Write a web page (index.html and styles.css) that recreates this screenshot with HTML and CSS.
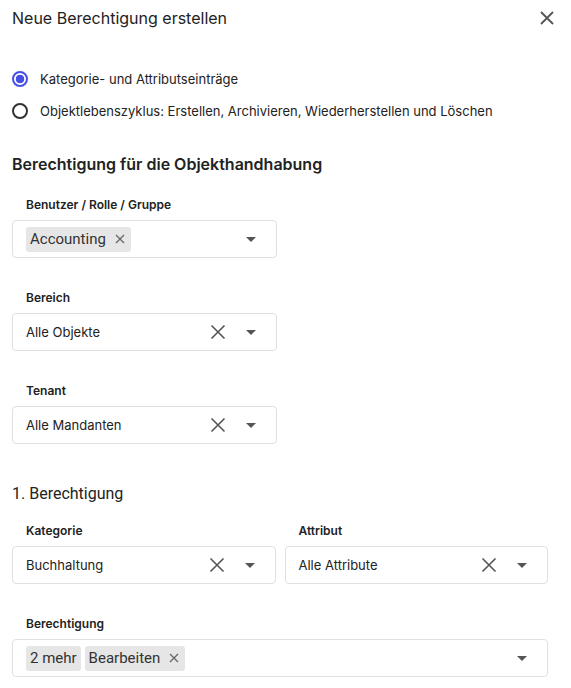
FILE: index.html
```html
<!DOCTYPE html>
<html lang="de">
<head>
<meta charset="utf-8">
<link rel="stylesheet" href="styles.css">
</head>
<body>
<div class="dialog">
  <div class="header">
    <div class="title">Neue Berechtigung erstellen</div>
    <svg class="close" width="16" height="16" viewBox="0 0 16 16"><path d="M2 2L14 14M14 2L2 14" stroke="#555" stroke-width="1.8" fill="none"/></svg>
  </div>

  <div class="radios">
    <label class="radio"><span class="dot on"></span><span>Kategorie- und Attributseinträge</span></label>
    <label class="radio"><span class="dot"></span><span>Objektlebenszyklus: Erstellen, Archivieren, Wiederherstellen und Löschen</span></label>
  </div>

  <div class="heading">Berechtigung für die Objekthandhabung</div>

  <div class="field half">
    <div class="label">Benutzer / Rolle / Gruppe</div>
    <div class="box chips">
      <span class="chip">Accounting<svg class="chipx" width="10" height="10" viewBox="0 0 10 10"><path d="M1 1L9 9M9 1L1 9" stroke="#666" stroke-width="1.3" fill="none"/></svg></span>
      <span class="spacer"></span>
      <svg class="caret" width="10" height="5" viewBox="0 0 10 5"><path d="M0 0H10L5 5Z" fill="#555"/></svg>
    </div>
  </div>

  <div class="field half">
    <div class="label">Bereich</div>
    <div class="box">
      <span class="value">Alle Objekte</span>
      <svg class="clear" width="16" height="16" viewBox="0 0 16 16"><path d="M1.5 1.5L14.5 14.5M14.5 1.5L1.5 14.5" stroke="#555" stroke-width="1.6" fill="none"/></svg>
      <svg class="caret" width="10" height="5" viewBox="0 0 10 5"><path d="M0 0H10L5 5Z" fill="#555"/></svg>
    </div>
  </div>

  <div class="field half">
    <div class="label">Tenant</div>
    <div class="box">
      <span class="value">Alle Mandanten</span>
      <svg class="clear" width="16" height="16" viewBox="0 0 16 16"><path d="M1.5 1.5L14.5 14.5M14.5 1.5L1.5 14.5" stroke="#555" stroke-width="1.6" fill="none"/></svg>
      <svg class="caret" width="10" height="5" viewBox="0 0 10 5"><path d="M0 0H10L5 5Z" fill="#555"/></svg>
    </div>
  </div>

  <div class="subheading">1. Berechtigung</div>

  <div class="row">
    <div class="field">
      <div class="label">Kategorie</div>
      <div class="box">
        <span class="value">Buchhaltung</span>
        <svg class="clear" width="16" height="16" viewBox="0 0 16 16"><path d="M1.5 1.5L14.5 14.5M14.5 1.5L1.5 14.5" stroke="#555" stroke-width="1.6" fill="none"/></svg>
        <svg class="caret" width="10" height="5" viewBox="0 0 10 5"><path d="M0 0H10L5 5Z" fill="#555"/></svg>
      </div>
    </div>
    <div class="field">
      <div class="label">Attribut</div>
      <div class="box">
        <span class="value">Alle Attribute</span>
        <svg class="clear" width="16" height="16" viewBox="0 0 16 16"><path d="M1.5 1.5L14.5 14.5M14.5 1.5L1.5 14.5" stroke="#555" stroke-width="1.6" fill="none"/></svg>
        <svg class="caret" width="10" height="5" viewBox="0 0 10 5"><path d="M0 0H10L5 5Z" fill="#555"/></svg>
      </div>
    </div>
  </div>

  <div class="field">
    <div class="label">Berechtigung</div>
    <div class="box chips">
      <span class="chip more">2 mehr</span>
      <span class="chip">Bearbeiten<svg class="chipx" width="10" height="10" viewBox="0 0 10 10"><path d="M1 1L9 9M9 1L1 9" stroke="#666" stroke-width="1.3" fill="none"/></svg></span>
      <span class="spacer"></span>
      <svg class="caret" width="10" height="5" viewBox="0 0 10 5"><path d="M0 0H10L5 5Z" fill="#555"/></svg>
    </div>
  </div>
</div>
</body>
</html>
```

FILE: styles.css
```css
html, body {
  margin: 0;
  padding: 0;
  background: #fff;
}
body {
  font-family: Inter, "Noto Sans", sans-serif;
  color: #222;
  overflow: hidden;
}
.dialog {
  width: 536px;
  padding: 0 23px 0 12px;
  display: flex;
  flex-direction: column;
}
.header {
  display: flex;
  align-items: center;
  justify-content: space-between;
  height: 36px;
  margin-right: -7px;
}
.title {
  font-size: 16px;
  color: #222;
}
.radios {
  margin-top: 27px;
  display: flex;
  flex-direction: column;
}
.radio {
  display: flex;
  align-items: center;
  height: 32px;
  font-size: 13px;
  color: #222;
}
.dot {
  width: 12px;
  height: 12px;
  border: 2px solid #333;
  border-radius: 50%;
  box-sizing: content-box;
  margin: 0 12px 0 0;
  flex: none;
}
.dot.on {
  border-color: #4450e4;
  background: radial-gradient(circle, #4450e4 0 4px, #fff 4.6px);
}
.heading {
  margin-top: 27px;
  font-size: 16px;
  font-weight: 600;
  line-height: 20px;
  color: #222;
}
.field {
  display: flex;
  flex-direction: column;
  margin-top: 23px;
}
.field.half {
  width: 265px;
}
.field.half + .field.half {
  margin-top: 32px;
}
.label {
  font-size: 12px;
  font-weight: 600;
  line-height: 16px;
  padding-left: 14px;
  margin-bottom: 7px;
  color: #222;
}
.box {
  height: 38px;
  box-sizing: border-box;
  border: 1px solid #e0e0e0;
  border-radius: 4px;
  display: flex;
  align-items: center;
  padding: 0 20px 0 13px;
}
.value {
  flex: 1;
  font-size: 13px;
  color: #222;
}
.clear {
  margin-right: 20px;
  flex: none;
}
.caret {
  flex: none;
}
.chips {
  gap: 4px;
}
.spacer {
  flex: 1;
}
.chip {
  display: inline-flex;
  align-items: center;
  height: 25px;
  background: #e6e6e6;
  border-radius: 3px;
  padding: 0 6px 0 4px;
  font-family: Roboto, "Noto Sans", sans-serif;
  font-size: 15px;
  color: #333;
}
.chip.more {
  padding: 0 4px;
}
.chipx {
  margin-left: 9px;
}
.subheading {
  margin-top: 40px;
  font-family: Roboto, "Noto Sans", sans-serif;
  font-size: 16px;
  line-height: 20px;
  color: #222;
}
.row {
  display: flex;
  gap: 9px;
}
.row .field {
  flex: 1;
  margin-top: 19px;
}
.row + .field {
  margin-top: 32px;
}
```
